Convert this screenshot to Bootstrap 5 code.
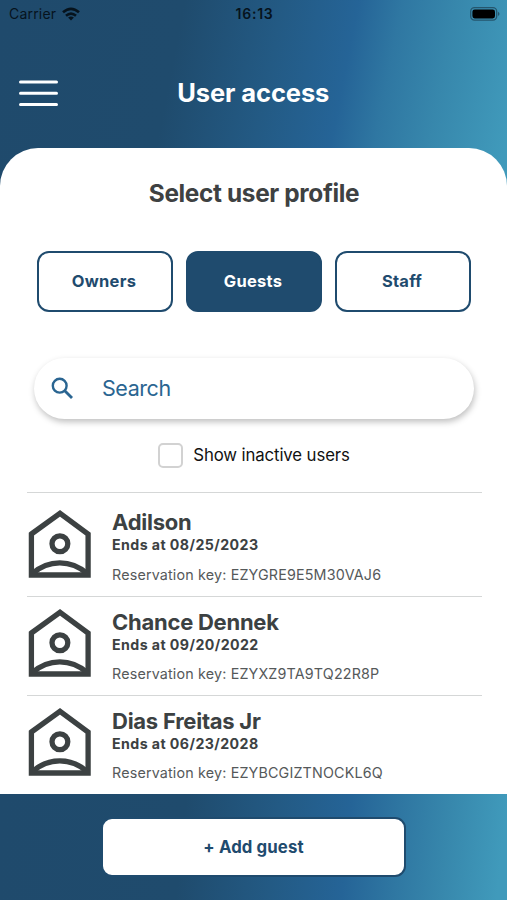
<!DOCTYPE html>
<html lang="en">
<head>
<meta charset="utf-8">
<meta name="viewport" content="width=device-width, initial-scale=1">
<title>User access</title>
<link href="https://cdn.jsdelivr.net/npm/bootstrap@5.3.0/dist/css/bootstrap.min.css" rel="stylesheet">
<style>
:root{--navy:#1f4b6e;--ink:#3c4142}
body{font-family:Inter,"Liberation Sans",sans-serif;color:#111;height:900px;overflow:hidden}
.screen{height:900px;background:linear-gradient(101deg,#1f4a6c 0%,#1f4b6d 34%,#235a84 52%,#256497 66%,#2f77a2 74%,#3787ac 84%,#409abb 98%) 0 0/100% 190px no-repeat}
.status{height:27px;padding:0 7px 0 9px;font-size:14px;color:#06131d}
.status .carrier{letter-spacing:.2px}
.status .wifi{margin-left:6px}
.status .clock{font-weight:600;letter-spacing:.75px}
.topbar{height:121px;padding:10px 19px 0 18.5px}
.menu-btn{width:39px;line-height:0}
.page-title{font-size:25.5px;font-weight:650;letter-spacing:-.1px;line-height:30px}
.sheet{height:646px;border-radius:38px 38px 0 0;overflow:hidden;padding:29px 25.5px 0 26.5px}
.section-title{font-size:24.4px;font-weight:650;letter-spacing:-.35px;line-height:33px;color:#3e4142}
.tabs-row{padding:0 10.5px;margin-top:41px;gap:13px}
.tab-btn{height:61px;border:2px solid var(--navy);border-radius:12px;color:var(--navy);font-size:16.5px;font-weight:700;letter-spacing:.25px;line-height:25px;padding:5px 12px 6px 10px}
.tab-btn.active{background:var(--navy)!important;color:#fff!important;border-color:var(--navy)!important}
.search{height:61px;margin:45.5px 7.5px 0 7px;padding:1px 0 0 17.5px;box-shadow:1px 3px 6px rgba(0,0,0,.25)}
.search svg{flex:none}
.search input{font-size:21.5px;letter-spacing:-.45px;color:#2a6591;padding:0;margin-left:27px}
.search input::placeholder{color:#2a6591;opacity:1}
.inactive{margin-top:24.5px;height:25px;font-size:16.8px;letter-spacing:-.12px;gap:10px}
.inactive .form-check-input{width:25px;height:25px;margin:0;border:2px solid #d2d2d2;border-radius:5px}
.inactive span{padding-top:1px}
.guests{margin-top:24px}
.guest{height:99.3px;border-top:1.5px solid #d5d7d7;gap:21.5px}
.guest:first-child{height:103.5px;padding-top:4px}
.guest svg{margin-top:11.5px;flex:none}
.guest .info{padding-top:11px;color:var(--ink)}
.guest .who{font-size:22px;font-weight:650;line-height:28px;letter-spacing:-.25px}
.guest .ends{font-size:14.2px;font-weight:700;line-height:17px;letter-spacing:.42px}
.guest .rkey{font-size:14.3px;line-height:18px;margin-top:12.5px;color:#55595a;letter-spacing:.17px}
.footer-bar{height:106px;padding-top:23px;background:linear-gradient(96deg,#1f4a6c 0%,#1f4b6d 36%,#235a84 54%,#256497 68%,#2f77a2 78%,#3787ac 87%,#409abb 98%)}
.add-btn{width:305px;height:60px;border:2px solid var(--navy);border-radius:11px;background:#fff;color:var(--navy);font-size:16.8px;font-weight:700;padding-top:7px;letter-spacing:.1px}
</style>
</head>
<body>
<svg class="d-none" xmlns="http://www.w3.org/2000/svg">
  <symbol id="house-user" viewBox="0 0 64 70">
    <g fill="none" stroke="#3c4142" stroke-width="5.3">
      <path d="M4.4 25 33 4.3 61.1 25V66H4.4Z"/>
      <circle cx="32.9" cy="34.7" r="7.9"/>
      <path d="M5.5 64.5Q17.5 53.8 32.8 53.8T60.1 64.5"/>
    </g>
  </symbol>
</svg>
<div class="screen d-flex flex-column">
  <div class="status row g-0 align-items-center">
    <div class="col d-flex align-items-center">
      <span class="carrier">Carrier</span>
      <svg class="wifi" width="18" height="14" viewBox="0 0 18 14" fill="none" stroke="#06131d" stroke-width="2.6"><path d="M1 5.3Q9-1.7 17 5.3M4 8.7Q9 4.4 14 8.7"/><path d="M9 13.4 6.1 10.5Q9 8.4 11.9 10.5Z" fill="#06131d" stroke="none"/></svg>
    </div>
    <div class="col-auto clock">16:13</div>
    <div class="col d-flex justify-content-end">
      <svg width="30" height="14" viewBox="0 0 30 14"><rect x=".7" y=".7" width="26" height="12.4" rx="3.8" fill="none" stroke="#25566d" stroke-width="1.3"/><rect x="2.4" y="2.4" width="22.6" height="9" rx="2.3"/><path d="M28 4.7q3 2.2 0 4.4z" fill="#25566d"/></svg>
    </div>
  </div>
  <header class="topbar row g-0 align-items-center text-white">
    <div class="col">
      <button class="menu-btn btn p-0 border-0" aria-label="Menu"><svg width="39" height="28" viewBox="0 0 39 28" stroke="#fff" stroke-width="3" stroke-linecap="round"><path d="M1.5 3h36M1.5 14.2h36M1.5 25.5h36"/></svg></button>
    </div>
    <h1 class="page-title col-auto m-0">User access</h1>
    <div class="col"></div>
  </header>
  <main class="sheet bg-white">
    <h2 class="section-title text-center m-0">Select user profile</h2>
    <div class="tabs-row d-flex">
      <button class="tab-btn btn flex-fill w-100">Owners</button>
      <button class="tab-btn btn flex-fill w-100 active">Guests</button>
      <button class="tab-btn btn flex-fill w-100">Staff</button>
    </div>
    <div class="search d-flex align-items-center rounded-pill bg-white">
      <svg width="24" height="24" viewBox="0 0 24 24" fill="none" stroke="#2a6591" stroke-width="2.4"><circle cx="8.7" cy="8.7" r="6.9"/><path d="M13.5 13.6 21 21.1" stroke-width="2.8"/></svg>
      <input class="form-control border-0 shadow-none bg-transparent" type="text" placeholder="Search" aria-label="Search">
    </div>
    <label class="inactive d-flex justify-content-center align-items-center">
      <input class="form-check-input" type="checkbox"><span>Show inactive users</span>
    </label>
    <div class="guests">
      <div class="guest d-flex"><svg width="64" height="70"><use href="#house-user"/></svg>
        <div class="info"><div class="who">Adilson</div><div class="ends">Ends at 08/25/2023</div><div class="rkey">Reservation key: EZYGRE9E5M30VAJ6</div></div></div>
      <div class="guest d-flex"><svg width="64" height="70"><use href="#house-user"/></svg>
        <div class="info"><div class="who">Chance Dennek</div><div class="ends">Ends at 09/20/2022</div><div class="rkey">Reservation key: EZYXZ9TA9TQ22R8P</div></div></div>
      <div class="guest d-flex"><svg width="64" height="70"><use href="#house-user"/></svg>
        <div class="info"><div class="who">Dias Freitas Jr</div><div class="ends">Ends at 06/23/2028</div><div class="rkey">Reservation key: EZYBCGIZTNOCKL6Q</div></div></div>
    </div>
  </main>
  <footer class="footer-bar d-flex justify-content-center align-items-start">
    <button class="add-btn btn">+ Add guest</button>
  </footer>
</div>
<script src="https://cdn.jsdelivr.net/npm/bootstrap@5.3.0/dist/js/bootstrap.bundle.min.js"></script>
</body>
</html>
